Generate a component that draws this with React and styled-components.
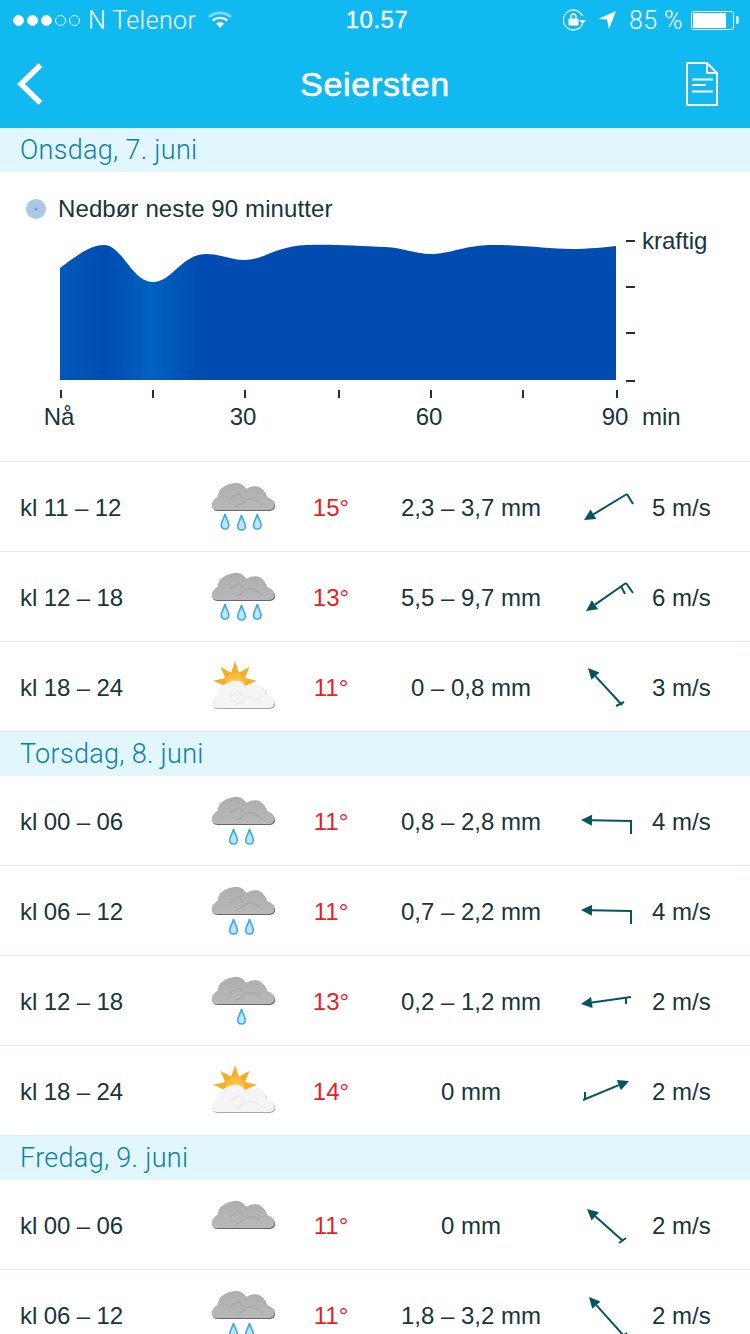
import styled, { createGlobalStyle } from "styled-components";

const Global = createGlobalStyle`
  html, body {
    margin: 0;
    padding: 0;
    background: #fff;
  }
  body {
    font-family: "Liberation Sans", Arial, sans-serif;
    color: #17353b;
  }
`;

const Page = styled.div`
  width: 750px;
  height: 1334px;
  overflow: hidden;
  background: #fff;
`;

const TopBar = styled.header`
  height: 128px;
  background: #10b9f0;
  color: #fff;
`;

const StatusBar = styled.div`
  height: 40px;
  display: grid;
  grid-template-columns: 1fr auto 1fr;
  align-items: center;
  padding: 0 9px 0 13px;
  font-family: Roboto, sans-serif;
  font-size: 25px;
  font-weight: 300;
  letter-spacing: 0.4px;
`;

const Clock = styled.span`
  font-family: "Liberation Sans", sans-serif;
  font-size: 24px;
  font-weight: 400;
  letter-spacing: 0.5px;
  -webkit-text-stroke: 0.3px #fff;
`;

const StatusLeft = styled.div`
  display: flex;
  align-items: center;
`;

const StatusRight = styled.div`
  display: flex;
  align-items: center;
  justify-content: flex-end;
`;

const Signal = styled.div`
  display: flex;
  gap: 3px;
  margin-right: 8px;
`;

const SignalDot = styled.span`
  width: 11px;
  height: 11px;
  box-sizing: border-box;
  border-radius: 50%;
  border: 1px solid #fff;
  background: ${(p) => (p.$on ? "#fff" : "transparent")};
`;

const Battery = styled.div`
  width: 43px;
  height: 19px;
  box-sizing: border-box;
  border: 1px solid #fff;
  border-radius: 3px;
  padding: 1px;
  margin: 0 7px 0 8px;
  position: relative;

  &::after {
    content: "";
    position: absolute;
    right: -6px;
    top: 4px;
    width: 3px;
    height: 8px;
    background: #c8f0fc;
    border-radius: 0 2px 2px 0;
  }
`;

const BatteryLevel = styled.div`
  width: 85%;
  height: 100%;
  background: #fff;
`;

const NavBar = styled.div`
  height: 88px;
  display: grid;
  grid-template-columns: 1fr auto 1fr;
  align-items: center;
  padding: 0 16px;
`;

const DocSlot = styled.div`
  justify-self: end;
  margin-right: 16px;
`;

const Title = styled.h1`
  margin: 0;
  font-size: 34px;
  font-weight: 400;
  letter-spacing: 0.7px;
  line-height: 88px;
  -webkit-text-stroke: 0.6px #fff;
`;

const DayHeader = styled.div`
  box-sizing: border-box;
  height: 44px;
  border-top: ${(p) => (p.$divider ? "1px solid #d3eef8" : "none")};
  line-height: 45px;
  padding-left: 20px;
  background: #e2f6fd;
  color: #0b7fa9;
  font-family: Roboto, sans-serif;
  font-size: 27px;
  font-weight: 300;
  letter-spacing: 0.3px;
`;

const ChartSection = styled.section`
  height: 289px;
  box-sizing: border-box;
  padding-top: 22px;
`;

const Legend = styled.div`
  display: flex;
  align-items: center;
  gap: 12px;
  height: 30px;
  padding-left: 26px;
  font-size: 24px;
  letter-spacing: 0.1px;
`;

const LegendDot = styled.span`
  width: 20px;
  height: 20px;
  border-radius: 50%;
  background: radial-gradient(circle, #6fa3d6 0 1px, #a9c8e6 2px);
`;

const ChartRow = styled.div`
  display: flex;
  align-items: flex-start;
  margin-top: 14px;
  padding-left: 60px;
`;

const ChartDrawing = styled.svg`
  display: block;
  flex: none;
`;

const Kraftig = styled.span`
  margin: -11px 0 0 6px;
  font-size: 24px;
  line-height: 28px;
`;

const AxisLabels = styled.div`
  display: grid;
  grid-template-columns: 184px 186px 186px 54px auto;
  justify-content: start;
  padding-left: 32px;
  margin-top: 5px;
  font-size: 24px;
  line-height: 28px;
`;

const AxisLabel = styled.span`
  display: block;
  width: 54px;
  text-align: center;
`;

const Row = styled.div`
  height: 90px;
  box-sizing: border-box;
  border-top: 1px solid ${(p) => (p.$first ? "#e2f6fd" : "#dcedf2")};
  display: grid;
  grid-template-columns: 188px 70px 106px 174px 85px 1fr;
  align-items: center;
  padding-left: 20px;
  font-size: 24px;
`;

const Cell = styled.span`
  padding-top: 2px;
  text-align: center;
  white-space: nowrap;
`;

const Time = styled(Cell)`
  text-align: left;
  letter-spacing: -0.1px;
`;

const Temp = styled(Cell)`
  color: #ec1c24;
`;

const ArrowSlot = styled.div`
  justify-self: end;
`;

const Speed = styled(Cell)`
  margin-left: 9px;
  text-align: left;
`;

const Drawing = styled.svg`
  display: block;
`;

const WifiDrawing = styled(Drawing)`
  margin-left: 12px;
`;

const LocationDrawing = styled(Drawing)`
  margin: 0 13px 0 12px;
`;

const wave =
  "M0 30 C16 18 30 7 44 7 C62 7 72 44 93 44 C112 44 122 16 146 16 C162 16 170 22 184 22 C204 22 216 8 246 7 C270 6 300 8 325 9 C345 10 355 16 371 16 C390 16 405 7 433 7 C465 7 490 11 510 11 C530 11 545 9 556 8 L556 142 L0 142 Z";

const RainChart = () => (
  <ChartDrawing width="576" height="160" viewBox="0 0 576 160">
    <defs>
      <linearGradient id="rain" x1="0" y1="0" x2="1" y2="0">
        <stop offset="0" stopColor="#005ab9" />
        <stop offset="0.08" stopColor="#004cb0" />
        <stop offset="0.165" stopColor="#0062c0" />
        <stop offset="0.25" stopColor="#004cb0" />
        <stop offset="1" stopColor="#004cb0" />
      </linearGradient>
    </defs>
    <path d={wave} fill="url(#rain)" />
    <g stroke="#17353b" strokeWidth="2">
      {[2, 48, 94, 142].map((y) => (
        <line key={y} x1="566" x2="575" y1={y + 1} y2={y + 1} />
      ))}
      {[1, 93, 185, 279, 371, 463, 557].map((x) => (
        <line key={x} x1={x} x2={x} y1="152" y2="160" />
      ))}
    </g>
  </ChartDrawing>
);

const cloudShape =
  "M9 31 C5 31 3.7 28 3.7 26 C4 22 7 19.5 10 17.5 C10 13 12 9.5 15.5 8 C19 5 27 3 32 4.5 C35 5.5 36.8 8 37.8 10.5 C41 7.5 48 6 52.5 8.8 C56 11 57.5 15 58.3 18 C62.5 18.5 66.3 22 66.5 26 C66.5 29 64 31 60 31 Z";

const cloudLines =
  "M22 20 C25 17 30 14 32 15.5 C34 16.5 35 18 35 20 M27 28.7 C29 26 32 25 33.7 25.3 C35 22 38 20 40 20 C44 19 47 21 48.7 22 C51 23 53 25 53.7 26.3";

const Drop = ({ x, y = 0 }) => (
  <path
    d={`M${x} ${35 + y} C${x + 1} ${40 + y} ${x + 3.8} ${43 + y} ${x + 3.8} ${46 + y} C${x + 3.8} ${48.5 + y} ${x + 2} ${50 + y} ${x} ${50 + y} C${x - 2} ${50 + y} ${x - 3.8} ${48.5 + y} ${x - 3.8} ${46 + y} C${x - 3.8} ${43 + y} ${x - 1} ${40 + y} ${x} ${35 + y} Z`}
    fill="#bde6f9"
    stroke="#3fabe6"
    strokeWidth="1.6"
  />
);

const dropPlaces = {
  0: [],
  1: [{ x: 33.5, y: 1 }],
  2: [{ x: 25.5, y: 1 }, { x: 41.5, y: 1 }],
  3: [{ x: 17, y: 0 }, { x: 33.5, y: 1 }, { x: 49.3, y: 0 }],
};

// five rays are all that shows above the cloud
const sunRays = () => {
  const points = ["27,24"];
  for (let k = -2; k <= 2; k++) {
    const mid = -90 + k * 42;
    [[mid - 21, 11], [mid, 22], [mid + 21, 11]].forEach(([deg, r]) => {
      const a = (deg * Math.PI) / 180;
      points.push(`${(27 + r * Math.cos(a)).toFixed(1)},${(24 + r * Math.sin(a)).toFixed(1)}`);
    });
  }
  return points.join(" ");
};

const WeatherIcon = ({ drops = 0, sun = false }) => (
  <Drawing width="70" height="89" viewBox="0 -17 70 89">
    <defs>
      <linearGradient id="greyCloud" x1="0" y1="0" x2="0" y2="1">
        <stop offset="0" stopColor="#aeaeae" />
        <stop offset="1" stopColor="#b8b8b8" />
      </linearGradient>
      <radialGradient id="sunBall" cy="0.7">
        <stop offset="0" stopColor="#ffeeb0" />
        <stop offset="1" stopColor="#fbbd3c" />
      </radialGradient>
    </defs>
    {sun ? (
      <>
        <polygon points={sunRays()} fill="#f7ad28" />
        <circle cx="27" cy="24" r="10" fill="url(#sunBall)" />
        <g transform="translate(0 18)">
          <path d={cloudShape} fill="#a8a8a8" transform="translate(0.7 1)" />
          <path d={cloudShape} fill="#f4f4f4" />
          <path d={cloudLines} stroke="#e4e4e4" strokeWidth="1" fill="none" />
        </g>
      </>
    ) : (
      <>
        <path d={cloudShape} fill="#666666" transform="translate(0.7 1)" />
        <path d={cloudShape} fill="url(#greyCloud)" />
        <path d={cloudLines} stroke="#a4a4a4" strokeWidth="1" fill="none" />
        {dropPlaces[drops].map((d) => (
          <Drop key={d.x} x={d.x} y={d.y} />
        ))}
      </>
    )}
  </Drawing>
);

// wind arrow, coordinates are px from the top of the row
const WindArrow = ({ tail, tip, barbs }) => {
  const dx = tip[0] - tail[0];
  const dy = tip[1] - tail[1];
  const len = Math.hypot(dx, dy);
  const ux = dx / len;
  const uy = dy / len;
  const bx = tip[0] - ux * 11;
  const by = tip[1] - uy * 11;
  const head = [
    tip,
    [bx - uy * 5.5, by + ux * 5.5],
    [bx + uy * 5.5, by - ux * 5.5],
  ]
    .map((p) => p.join(","))
    .join(" ");
  return (
    <Drawing width="70" height="89" viewBox="0 1 70 89">
      <g stroke="#07545f" strokeWidth="2" fill="none">
        <line x1={tail[0]} y1={tail[1]} x2={bx} y2={by} />
        {barbs.map((b, i) => (
          <line key={i} x1={b[0]} y1={b[1]} x2={b[2]} y2={b[3]} />
        ))}
      </g>
      <polygon points={head} fill="#07545f" />
    </Drawing>
  );
};

const days = [
  {
    title: "Onsdag, 7. juni",
    chart: true,
    rows: [
      { time: "kl 11 – 12", drops: 3, temp: "15°", rain: "2,3 – 3,7 mm", speed: "5 m/s", tail: [54, 33], tip: [11, 59], barbs: [[54, 33, 60, 43]] },
      { time: "kl 12 – 18", drops: 3, temp: "13°", rain: "5,5 – 9,7 mm", speed: "6 m/s", tail: [53, 32], tip: [13, 60], barbs: [[53, 32, 60, 42], [48, 35, 52, 43]] },
      { time: "kl 18 – 24", sun: true, temp: "11°", rain: "0 – 0,8 mm", speed: "3 m/s", tail: [49, 64], tip: [15, 27], barbs: [[43, 65, 51, 61]] },
    ],
  },
  {
    title: "Torsdag, 8. juni",
    rows: [
      { time: "kl 00 – 06", drops: 2, temp: "11°", rain: "0,8 – 2,8 mm", speed: "4 m/s", tail: [58, 46], tip: [8, 45], barbs: [[58, 45, 58, 59]] },
      { time: "kl 06 – 12", drops: 2, temp: "11°", rain: "0,7 – 2,2 mm", speed: "4 m/s", tail: [58, 46], tip: [8, 45], barbs: [[58, 45, 58, 59]] },
      { time: "kl 12 – 18", drops: 1, temp: "13°", rain: "0,2 – 1,2 mm", speed: "2 m/s", tail: [58, 42], tip: [8, 49], barbs: [[53, 43, 53, 49]] },
      { time: "kl 18 – 24", sun: true, temp: "14°", rain: "0 mm", speed: "2 m/s", tail: [10, 55], tip: [56, 36], barbs: [[12, 54, 12, 47]] },
    ],
  },
  {
    title: "Fredag, 9. juni",
    rows: [
      { time: "kl 00 – 06", drops: 0, temp: "11°", rain: "0 mm", speed: "2 m/s", tail: [50, 62], tip: [14, 30], barbs: [[46, 64, 53, 59]] },
      { time: "kl 06 – 12", drops: 2, temp: "11°", rain: "1,8 – 3,2 mm", speed: "2 m/s", tail: [51, 67], tip: [16, 28], barbs: [[47, 69, 54, 64]] },
    ],
  },
];

const WifiIcon = () => (
  <WifiDrawing width="24" height="18" viewBox="0 0 24 18">
    <path d="M1 6 C7 0.5 17 0.5 23 6" stroke="#7fdcf8" strokeWidth="2.6" fill="none" />
    <path d="M4.5 9.5 C9 6 15 6 19.5 9.5" stroke="#fff" strokeWidth="2.4" fill="none" />
    <path d="M8 12.5 L12 17 L16 12.5 C13.5 10.5 10.5 10.5 8 12.5 Z" fill="#fff" />
  </WifiDrawing>
);

const RotationLock = () => (
  <Drawing width="23" height="22" viewBox="0 0 23 22">
    <path d="M19.5 7 A10 10 0 1 0 19.5 15" stroke="#fff" strokeWidth="1.2" fill="none" />
    <polygon points="16,11 23,11 19.5,15" fill="#fff" />
    <rect x="5.5" y="9.5" width="10" height="7" rx="1" fill="#fff" />
    <path d="M8 9.5 V7.5 A2.5 2.5 0 0 1 13 7.5 V9.5" stroke="#fff" strokeWidth="1.4" fill="none" />
  </Drawing>
);

const LocationIcon = () => (
  <LocationDrawing width="18" height="18" viewBox="0 0 18 18">
    <polygon points="18,0 0,8 9,8.5 11,18" fill="#fff" />
  </LocationDrawing>
);

const BackIcon = () => (
  <Drawing width="30" height="44" viewBox="0 0 30 44">
    <path d="M24.5 3 L5 22 L24.5 41" stroke="#fff" strokeWidth="5.5" fill="none" />
  </Drawing>
);

const DocIcon = () => (
  <Drawing width="32" height="44" viewBox="0 0 32 44">
    <path d="M1 1 H21 L31 11 V43 H1 Z M21 1 V11 H31" stroke="#fff" strokeWidth="2" fill="none" />
    <path d="M6 17.5 H27 M6 23 H20 M6 29.5 H27" stroke="#fff" strokeWidth="2" fill="none" />
  </Drawing>
);

const App = () => (
  <Page>
    <Global />
    <TopBar>
      <StatusBar>
        <StatusLeft>
          <Signal>
            {[1, 1, 1, 0, 0].map((on, i) => (
              <SignalDot key={i} $on={on === 1} />
            ))}
          </Signal>
          N Telenor
          <WifiIcon />
        </StatusLeft>
        <Clock>10.57</Clock>
        <StatusRight>
          <RotationLock />
          <LocationIcon />
          85 %
          <Battery>
            <BatteryLevel />
          </Battery>
        </StatusRight>
      </StatusBar>
      <NavBar>
        <BackIcon />
        <Title>Seiersten</Title>
        <DocSlot>
          <DocIcon />
        </DocSlot>
      </NavBar>
    </TopBar>
    {days.map((day) => (
      <div key={day.title}>
        <DayHeader $divider={!day.chart}>{day.title}</DayHeader>
        {day.chart && (
          <ChartSection>
            <Legend>
              <LegendDot />
              Nedbør neste 90 minutter
            </Legend>
            <ChartRow>
              <RainChart />
              <Kraftig>kraftig</Kraftig>
            </ChartRow>
            <AxisLabels>
              <AxisLabel>Nå</AxisLabel>
              <AxisLabel>30</AxisLabel>
              <AxisLabel>60</AxisLabel>
              <AxisLabel>90</AxisLabel>
              <span>min</span>
            </AxisLabels>
          </ChartSection>
        )}
        {day.rows.map((row, i) => (
          <Row key={row.time} $first={i === 0 && !day.chart}>
            <Time>{row.time}</Time>
            <WeatherIcon drops={row.drops} sun={row.sun} />
            <Temp>{row.temp}</Temp>
            <Cell>{row.rain}</Cell>
            <ArrowSlot>
              <WindArrow tail={row.tail} tip={row.tip} barbs={row.barbs} />
            </ArrowSlot>
            <Speed>{row.speed}</Speed>
          </Row>
        ))}
      </div>
    ))}
  </Page>
);

export default App;
